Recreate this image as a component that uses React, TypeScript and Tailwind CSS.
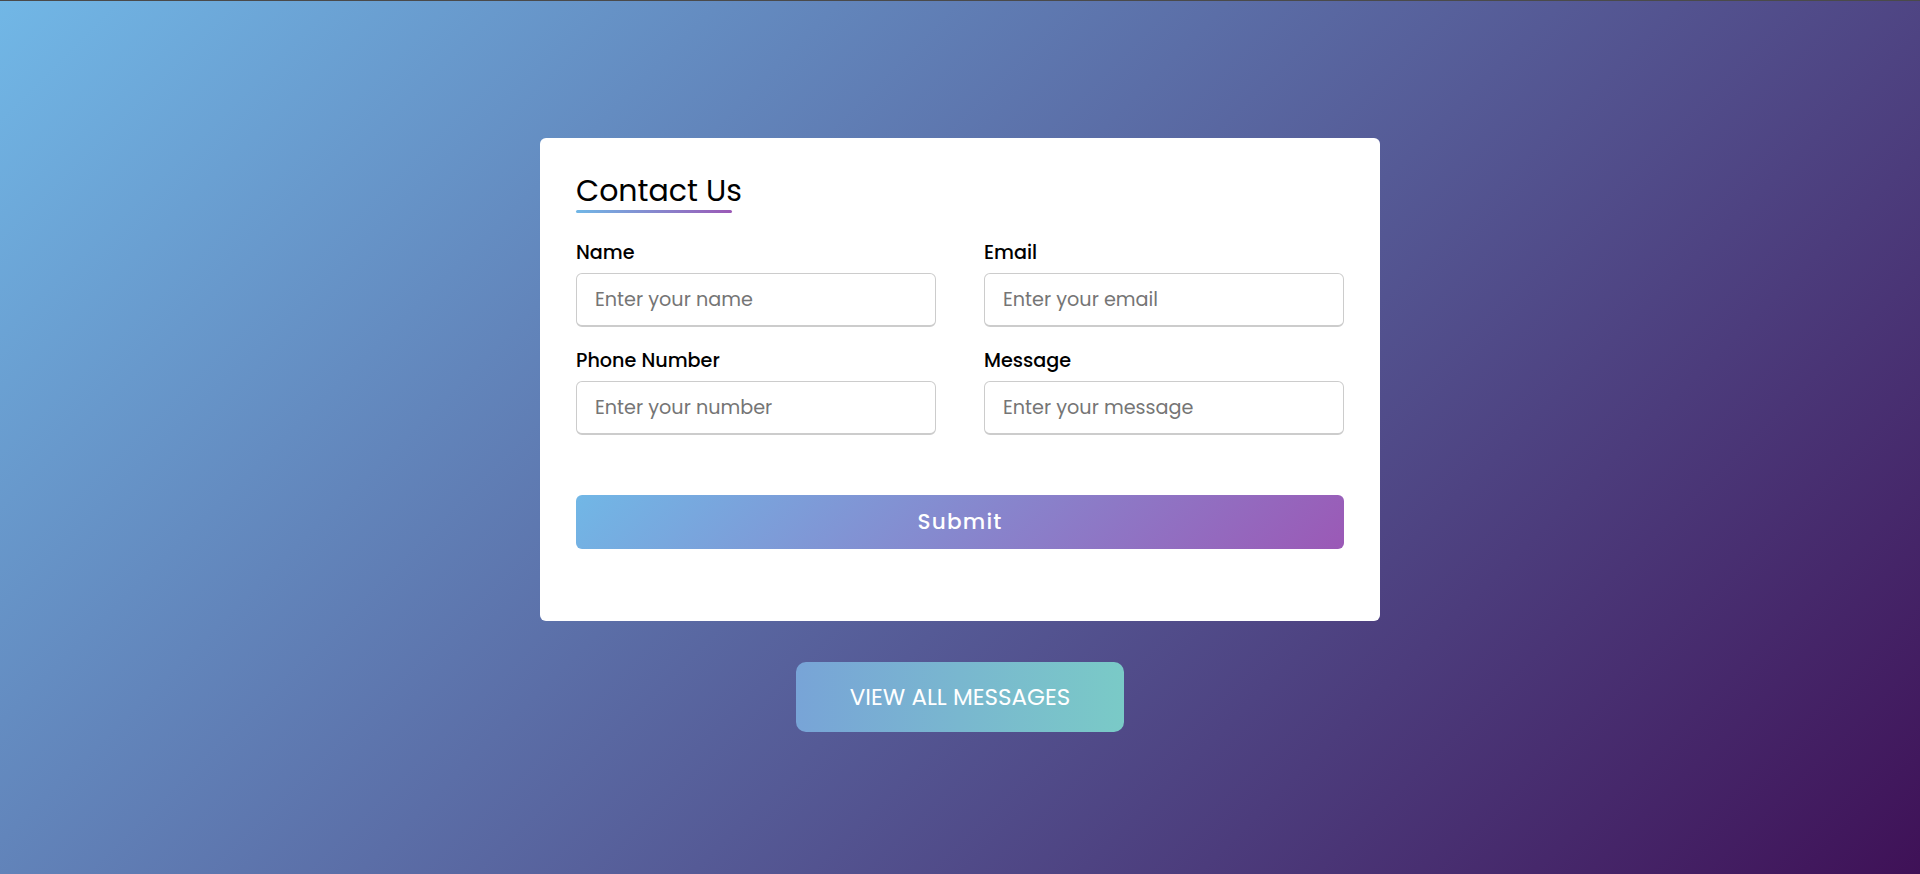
import React from "react";

const font = { fontFamily: '"Poppins", "Open Sans", "Noto Sans", sans-serif' };

function Field({ label, placeholder }: { label: string; placeholder: string }) {
  return (
    <div className="flex flex-col mb-[18px]">
      <span className="block h-[30px] leading-[32px] text-[19.2px] font-medium text-black mb-[6px]">{label}</span>
      <input
        type="text"
        placeholder={placeholder}
        className="h-[54px] w-full rounded-[6px] border border-b-2 border-[#cccccc] pl-[18px] text-[19.2px] text-[#333] outline-none placeholder:text-[#757575] bg-white"
        style={font}
      />
    </div>
  );
}

export default function App() {
  return (
    <div className="w-full min-h-[874px] flex flex-col" style={font}>
      <div className="h-px w-full bg-[#4a4a4a]" />
      <div className="flex-1 w-full flex flex-col items-center pt-[137px] bg-[linear-gradient(135deg,#71b7e6_0%,#3f1157_100%)]">
        <div className="w-[840px] bg-white rounded-[6px] px-[36px] pt-[30px] pb-[72px]">
          <div className="h-[42px] leading-[46px] text-[30px] font-normal text-black">Contact Us</div>
          <div className="h-[3px] w-[156px] rounded-[2px] bg-[linear-gradient(to_right,#71b7e6,#9b59b6)]" />
          <div className="mt-[24px] grid grid-cols-2 gap-x-[48px]">
            <Field label="Name" placeholder="Enter your name" />
            <Field label="Email" placeholder="Enter your email" />
            <Field label="Phone Number" placeholder="Enter your number" />
            <Field label="Message" placeholder="Enter your message" />
          </div>
          <button
            className="mt-[42px] h-[54px] w-full rounded-[6px] text-white text-[21.6px] font-medium tracking-[1.2px] bg-[linear-gradient(135deg,#71b7e6,#9b59b6)]"
            style={font}
          >
            Submit
          </button>
        </div>
        <button
          className="mt-[41px] h-[70px] w-[328px] rounded-[10px] text-white text-[23px] font-normal bg-[linear-gradient(to_right,#78a4d7,#7acac7)]"
          style={font}
        >
          VIEW ALL MESSAGES
        </button>
      </div>
    </div>
  );
}
